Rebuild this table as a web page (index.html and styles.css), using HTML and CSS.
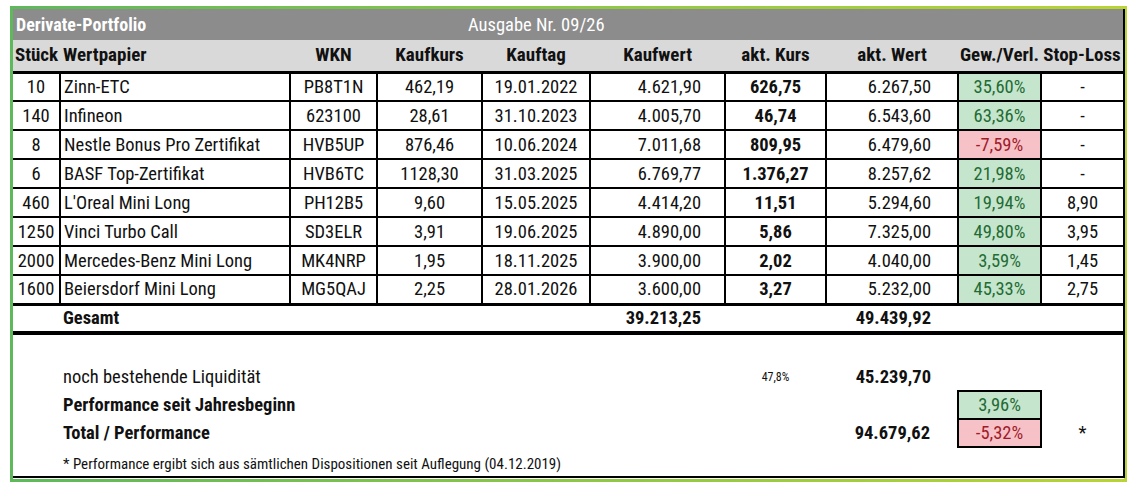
FILE: index.html
```html
<!DOCTYPE html>
<html lang="de">
<head>
<meta charset="utf-8">
<title>Derivate-Portfolio</title>
<link rel="stylesheet" href="styles.css">
</head>
<body>
<div class="frame">
  <table class="sheet">
    <colgroup>
      <col class="c-qty"><col class="c-name"><col class="c-wkn"><col class="c-kk"><col class="c-kt">
      <col class="c-kw"><col class="c-ak"><col class="c-aw"><col class="c-gv"><col class="c-sl">
    </colgroup>
    <tr class="title">
      <td colspan="3" class="t-name">Derivate-Portfolio</td>
      <td colspan="7" class="t-issue">Ausgabe Nr. 09/26</td>
    </tr>
    <tr class="head">
      <th class="ctr">Stück</th><th class="left">Wertpapier</th><th>WKN</th><th>Kaufkurs</th><th>Kauftag</th>
      <th class="h-kw">Kaufwert</th><th>akt. Kurs</th><th>akt. Wert</th><th>Gew./Verl.</th><th>Stop-Loss</th>
    </tr>
    <tr class="row">
      <td class="ctr">10</td><td class="name">Zinn-ETC</td><td class="ctr">PB8T1N</td><td class="ctr">462,19</td><td class="ctr">19.01.2022</td>
      <td class="kw">4.621,90</td><td class="ak">626,75</td><td class="aw">6.267,50</td><td class="pos">35,60%</td><td class="ctr">-</td>
    </tr>
    <tr class="row">
      <td class="ctr">140</td><td class="name">Infineon</td><td class="ctr">623100</td><td class="ctr">28,61</td><td class="ctr">31.10.2023</td>
      <td class="kw">4.005,70</td><td class="ak">46,74</td><td class="aw">6.543,60</td><td class="pos">63,36%</td><td class="ctr">-</td>
    </tr>
    <tr class="row">
      <td class="ctr">8</td><td class="name">Nestle Bonus Pro Zertifikat</td><td class="ctr">HVB5UP</td><td class="ctr">876,46</td><td class="ctr">10.06.2024</td>
      <td class="kw">7.011,68</td><td class="ak">809,95</td><td class="aw">6.479,60</td><td class="neg">-7,59%</td><td class="ctr">-</td>
    </tr>
    <tr class="row">
      <td class="ctr">6</td><td class="name">BASF Top-Zertifikat</td><td class="ctr">HVB6TC</td><td class="ctr">1128,30</td><td class="ctr">31.03.2025</td>
      <td class="kw">6.769,77</td><td class="ak">1.376,27</td><td class="aw">8.257,62</td><td class="pos">21,98%</td><td class="ctr">-</td>
    </tr>
    <tr class="row">
      <td class="ctr">460</td><td class="name">L'Oreal Mini Long</td><td class="ctr">PH12B5</td><td class="ctr">9,60</td><td class="ctr">15.05.2025</td>
      <td class="kw">4.414,20</td><td class="ak">11,51</td><td class="aw">5.294,60</td><td class="pos">19,94%</td><td class="ctr">8,90</td>
    </tr>
    <tr class="row">
      <td class="ctr">1250</td><td class="name">Vinci Turbo Call</td><td class="ctr">SD3ELR</td><td class="ctr">3,91</td><td class="ctr">19.06.2025</td>
      <td class="kw">4.890,00</td><td class="ak">5,86</td><td class="aw">7.325,00</td><td class="pos">49,80%</td><td class="ctr">3,95</td>
    </tr>
    <tr class="row">
      <td class="ctr">2000</td><td class="name">Mercedes-Benz Mini Long</td><td class="ctr">MK4NRP</td><td class="ctr">1,95</td><td class="ctr">18.11.2025</td>
      <td class="kw">3.900,00</td><td class="ak">2,02</td><td class="aw">4.040,00</td><td class="pos">3,59%</td><td class="ctr">1,45</td>
    </tr>
    <tr class="row">
      <td class="ctr">1600</td><td class="name">Beiersdorf Mini Long</td><td class="ctr">MG5QAJ</td><td class="ctr">2,25</td><td class="ctr">28.01.2026</td>
      <td class="kw">3.600,00</td><td class="ak">3,27</td><td class="aw">5.232,00</td><td class="pos">45,33%</td><td class="ctr">2,75</td>
    </tr>
    <tr class="sum">
      <td></td><td class="name b">Gesamt</td><td></td><td></td><td></td>
      <td class="kw b">39.213,25</td><td></td><td class="aw b">49.439,92</td><td></td><td></td>
    </tr>
    <tr class="gap"><td colspan="10"></td></tr>
    <tr class="extra">
      <td></td><td colspan="4" class="name">noch bestehende Liquidität</td><td></td>
      <td class="small">47,8%</td><td class="aw b">45.239,70</td><td></td><td></td>
    </tr>
    <tr class="extra">
      <td></td><td colspan="4" class="name b">Performance seit Jahresbeginn</td><td></td>
      <td></td><td></td><td class="box pos">3,96%</td><td></td>
    </tr>
    <tr class="extra">
      <td></td><td colspan="4" class="name b">Total / Performance</td><td></td>
      <td></td><td class="aw b">94.679,62</td><td class="box neg">-5,32%</td><td class="ctr">*</td>
    </tr>
    <tr class="note">
      <td></td><td colspan="9" class="name">* Performance ergibt sich aus sämtlichen Dispositionen seit Auflegung (04.12.2019)</td>
    </tr>
  </table>
</div>
</body>
</html>
```
FILE: styles.css
```css
* { box-sizing: border-box; }

html, body {
  margin: 0;
  padding: 0;
  background: #ffffff;
}

body {
  padding: 6px 0 0 10px;
  font-family: "Roboto Condensed", "Liberation Sans Narrow", "DejaVu Sans Condensed", sans-serif;
  color: #111;
}

.frame {
  width: 1117px;
  height: 476px;
  border: 3px solid #6cbb4f;
  border-image: linear-gradient(to right, #5db95a, #8cc746 50%, #b8d432) 1;
  background: #fff;
}

.sheet {
  width: 1111px;
  table-layout: fixed;
  border-collapse: collapse;
  border-right: 2px solid #000;
  border-bottom: 2px solid #000;
  font-size: 18.5px;
}

.c-qty { width: 47px; }
.c-name { width: 230px; }
.c-wkn { width: 87px; }
.c-kk { width: 105px; }
.c-kt { width: 108px; }
.c-kw { width: 135px; }
.c-ak { width: 101px; }
.c-aw { width: 132px; }
.c-gv { width: 83px; }
.c-sl { width: 83px; }

td, th {
  padding: 0;
  white-space: nowrap;
  overflow: visible;
  line-height: 20px;
}

.title td {
  background: #8c8c8c;
  color: #fff;
  height: 31px;
}
.t-name { font-weight: bold; font-size: 18px; padding-left: 3px; }
.t-issue { padding-left: 91px; font-size: 18.5px; }

.head th {
  background: #d9d9d9;
  height: 32px;
  font-weight: bold;
  font-size: 19px;
  text-align: center;
  border-bottom: 3px solid #000;
}
.head th.left { text-align: left; padding-left: 3px; }
.head th.h-kw { text-align: right; padding-right: 33px; }

.row td {
  height: 29px;
  border: 2px solid #000;
}
.row td:first-child { border-left: none; }

.ctr { text-align: center; }
.name { text-align: left; padding-left: 3px; }
.kw { text-align: right; padding-right: 23px; }
.ak { text-align: center; font-weight: bold; }
.aw { text-align: right; padding-right: 26px; }
.b { font-weight: bold; }
.kw.b { padding-right: 24px; }
.aw.b { padding-right: 27px; }

.pos { background: #c6e5cd; color: #236b34; text-align: center; }
.neg { background: #f6c2c7; color: #a01b2a; text-align: center; }

.sum td {
  height: 29px;
  border-top: 3px solid #000;
  border-bottom: 4px solid #000;
}

.gap td { height: 30px; }

.extra td { height: 28px; }
.extra .box { border: 2px solid #000; }

.small { font-size: 12px; text-align: center; }

.note td { height: 30px; font-size: 15px; padding-top: 3px; }
```
